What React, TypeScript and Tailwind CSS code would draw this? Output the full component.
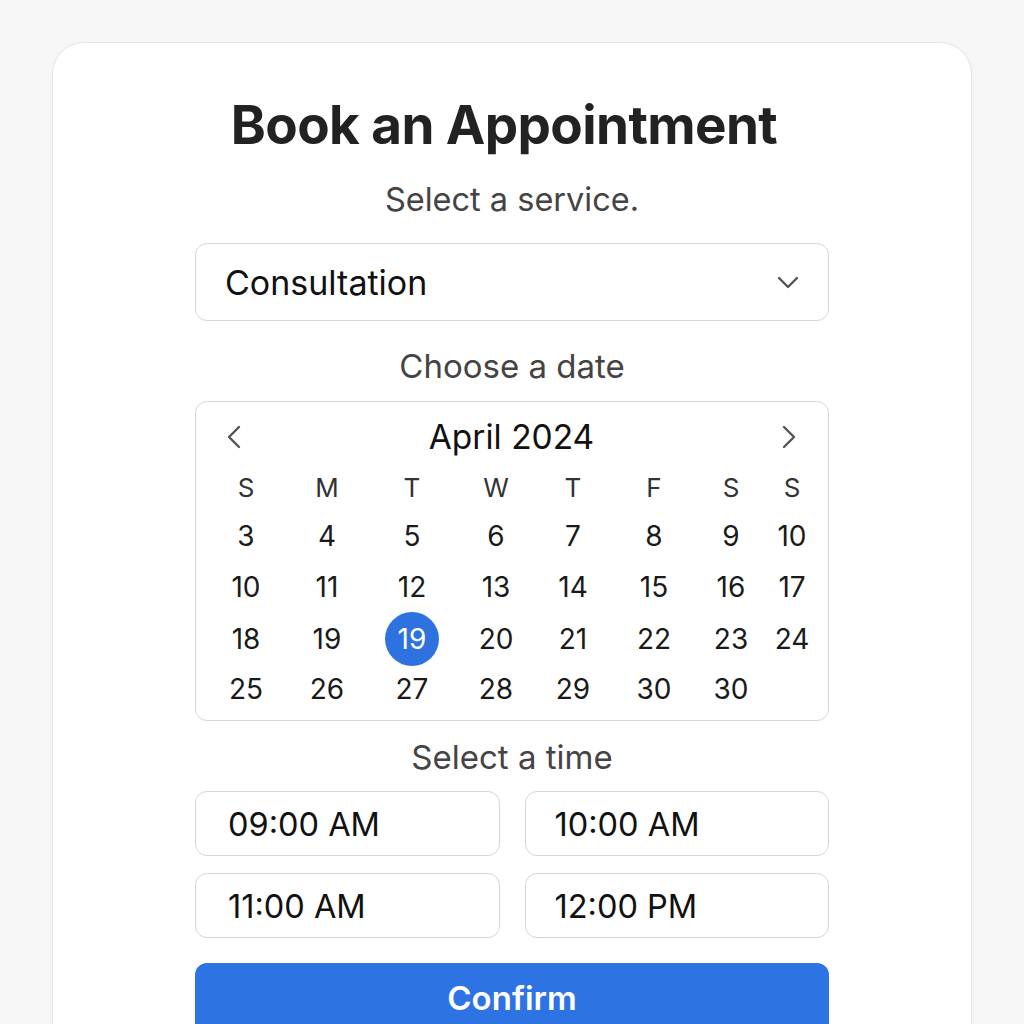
import React from "react";

const weeks: (number | null)[][] = [
  [3, 4, 5, 6, 7, 8, 9, 10],
  [10, 11, 12, 13, 14, 15, 16, 17],
  [18, 19, 19, 20, 21, 22, 23, 24],
  [25, 26, 27, 28, 29, 30, 30, null],
];

const dayLabels = ["S", "M", "T", "W", "T", "F", "S", "S"];
const times = ["09:00 AM", "10:00 AM", "11:00 AM", "12:00 PM"];

const cols = "grid grid-cols-[80px_82px_88px_80px_74px_88px_66px_56px] pl-[10px]";

function Chevron({ dir }: { dir: "left" | "right" }) {
  return (
    <svg width="14" height="24" viewBox="0 0 14 24" fill="none">
      <path
        d={dir === "left" ? "M12 2 2 12l10 10" : "M2 2l10 10-10 10"}
        stroke="#555"
        strokeWidth="2.4"
        strokeLinecap="round"
        strokeLinejoin="round"
      />
    </svg>
  );
}

export default function App() {
  return (
    <div className="min-h-screen overflow-hidden bg-[#f7f7f7] font-['Inter',sans-serif] text-[#1f1f1f]">
      <div className="h-[1024px] overflow-hidden pt-[42px]">
        <div className="mx-[52px] h-[1100px] rounded-[32px] border border-[#e6e6e6] bg-white pt-[52px] shadow-[0_2px_10px_rgba(0,0,0,0.03)]">
          <div className="mx-auto w-[634px]">
            <h1 className="pr-[16px] text-center text-[53px] font-bold leading-[60px] tracking-[-0.6px] text-[#222]">
              Book an Appointment
            </h1>
            <p className="mt-[25px] text-center text-[32.5px] leading-[40px] text-[#444]">Select a service.</p>

            <button className="mt-[23px] flex h-[78px] w-full items-center justify-between rounded-[12px] border border-[#d6d6d6] bg-white pl-[29px] pr-[28px] text-left">
              <span className="text-[34px] text-[#111]">Consultation</span>
              <svg width="24" height="14" viewBox="0 0 24 14" fill="none">
                <path d="M3 3l9 9 9-9" stroke="#555" strokeWidth="2.4" strokeLinecap="round" strokeLinejoin="round" />
              </svg>
            </button>

            <p className="mt-[25px] text-center text-[33px] leading-[40px] text-[#444]">Choose a date</p>

            <div className="mt-[15px] h-[320px] rounded-[12px] border border-[#d6d6d6] pt-[13px]">
              <div className="flex h-[44px] items-center justify-between pl-[31px] pr-[32px]">
                <Chevron dir="left" />
                <span className="text-[33.5px] text-[#111]">April 2024</span>
                <Chevron dir="right" />
              </div>
              <div className={`${cols} mt-[5px] h-[46px] items-center`}>
                {dayLabels.map((d, i) => (
                  <div key={i} className="text-center text-[26px] text-[#333]">
                    {d}
                  </div>
                ))}
              </div>
              {weeks.map((week, wi) => (
                <div key={wi} className={`${cols} h-[51px]`}>
                  {week.map((n, di) => {
                    const selected = wi === 2 && di === 2;
                    return (
                      <div key={di} className="flex items-center justify-center">
                        {n !== null &&
                          (selected ? (
                            <span className="flex h-[54px] w-[54px] shrink-0 items-center justify-center rounded-full bg-[#2e72e0] text-[28px] text-white">
                              {n}
                            </span>
                          ) : (
                            <span className="text-[28px] text-[#1a1a1a]">{n}</span>
                          ))}
                      </div>
                    );
                  })}
                </div>
              ))}
            </div>

            <p className="mt-[16px] text-center text-[33px] leading-[40px] text-[#444]">Select a time</p>

            <div className="mt-[14px] grid grid-cols-2 gap-x-[25px] gap-y-[17px]">
              {times.map((t, i) => (
                <button
                  key={t}
                  className={`flex h-[65px] items-center rounded-[12px] border border-[#d6d6d6] bg-white pt-[4px] text-[32.5px] text-[#111] ${
                    i % 2 === 0 ? "pl-[32px]" : "pl-[29px]"
                  }`}
                >
                  {t}
                </button>
              ))}
            </div>

            <button className="mt-[25px] flex h-[72px] w-full items-center justify-center rounded-[12px] bg-[#2e73e3] text-[33px] font-semibold text-white">
              Confirm
            </button>
          </div>
        </div>
      </div>
    </div>
  );
}
